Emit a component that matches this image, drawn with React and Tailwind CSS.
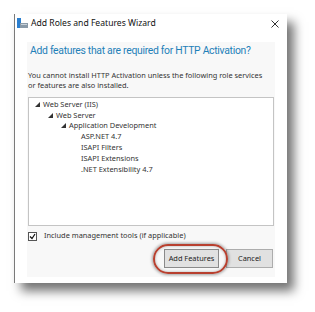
import React from 'react';

function Arrow() {
  return (
    <svg width="5" height="5" viewBox="0 0 5 5" className="shrink-0">
      <polygon points="5,0 5,5 0,5" fill="#333" />
    </svg>
  );
}

function TreeRow({ indent, arrow, children }) {
  return (
    <div className="flex items-center h-[10.8px]" style={{ paddingLeft: indent }}>
      {arrow ? <Arrow /> : <span className="w-[5px]" />}
      <span className="ml-[3px]">{children}</span>
    </div>
  );
}

export default function App() {
  return (
    <div className="w-[315px] h-[312px] bg-white overflow-hidden font-['Noto_Sans',sans-serif] text-[#222]">
      <div className="ml-[14px] mt-[14px] w-[273px] h-[269px] bg-white border-l border-[#7a7a7a] shadow-[7px_8px_10px_rgba(0,0,0,0.55)] flex flex-col">
        {/* title bar */}
        <div className="h-[18px] flex items-center pl-[2px] pr-[8px]">
          <svg width="11" height="11" viewBox="0 0 11 11">
            <rect x="0" y="0" width="4" height="10" fill="#2a7fd0" />
            <rect x="3" y="5" width="8" height="5" fill="#8a9aa8" />
            <rect x="4" y="6" width="6" height="1" fill="#c8d2da" />
          </svg>
          <span className="ml-[3px] text-[8.6px] leading-none text-[#111]">Add Roles and Features Wizard</span>
          <svg width="8" height="8" viewBox="0 0 8 8" className="ml-auto mt-[1px]">
            <path d="M0.5 0.5 L7.5 7.5 M7.5 0.5 L0.5 7.5" stroke="#333" strokeWidth="1" />
          </svg>
        </div>

        {/* content panel */}
        <div className="ml-[12px] mt-[10px] mb-[6px] w-[248px] flex-1 bg-[#f8f8f8] px-[1px] flex flex-col">
          <div className="pt-[2px] pl-[2px] h-[16px] font-['Roboto',sans-serif] text-[10.4px] tracking-[-0.3px] leading-[14px] whitespace-nowrap text-[#1e80b8]">
            Add features that are required for HTTP Activation?
          </div>
          <div className="mt-[12px] text-[7.4px] leading-[10px] whitespace-nowrap text-[#333]">
            You cannot install HTTP Activation unless the following role services
            <br />
            or features are also installed.
          </div>
          <div className="mt-[7px] h-[129px] bg-white border border-[#c4c4c4] pt-[1px] text-[7.4px] text-[#333]">
            <TreeRow indent={6} arrow>Web Server (IIS)</TreeRow>
            <TreeRow indent={19} arrow>Web Server</TreeRow>
            <TreeRow indent={32} arrow>Application Development</TreeRow>
            <TreeRow indent={44}>ASP.NET 4.7</TreeRow>
            <TreeRow indent={44}>ISAPI Filters</TreeRow>
            <TreeRow indent={44}>ISAPI Extensions</TreeRow>
            <TreeRow indent={44}>.NET Extensibility 4.7</TreeRow>
          </div>
          <div className="mt-[5px] flex items-center h-[10px]">
            <div className="w-[9px] h-[9px] border border-[#555] bg-white flex items-center justify-center">
              <svg width="7" height="7" viewBox="0 0 7 7">
                <path d="M1 3.5 L3 5.5 L6 1" stroke="#111" strokeWidth="1.2" fill="none" />
              </svg>
            </div>
            <span className="ml-[7px] text-[7.4px] leading-none text-[#333]">Include management tools (if applicable)</span>
          </div>
          <div className="mt-[8px] flex justify-end gap-[7px] pr-[1px]">
            <div className="relative">
              <div className="w-[55px] h-[19px] bg-[#e1e1e1] border border-[#8a8a8a] flex items-center justify-center text-[7.4px] text-[#222]">
                Add Features
              </div>
              <div className="absolute left-[-11px] top-[-5px] w-[75px] h-[30px] rounded-[15px] border-2 border-[#b8402f] shadow-[0_0_3px_1px_rgba(0,0,0,0.35),inset_0_0_3px_rgba(0,0,0,0.3)]" />
            </div>
            <div className="w-[47px] h-[19px] bg-[#e1e1e1] border border-[#adadad] flex items-center justify-center text-[7.4px] text-[#222]">
              Cancel
            </div>
          </div>
        </div>
      </div>
    </div>
  );
}
